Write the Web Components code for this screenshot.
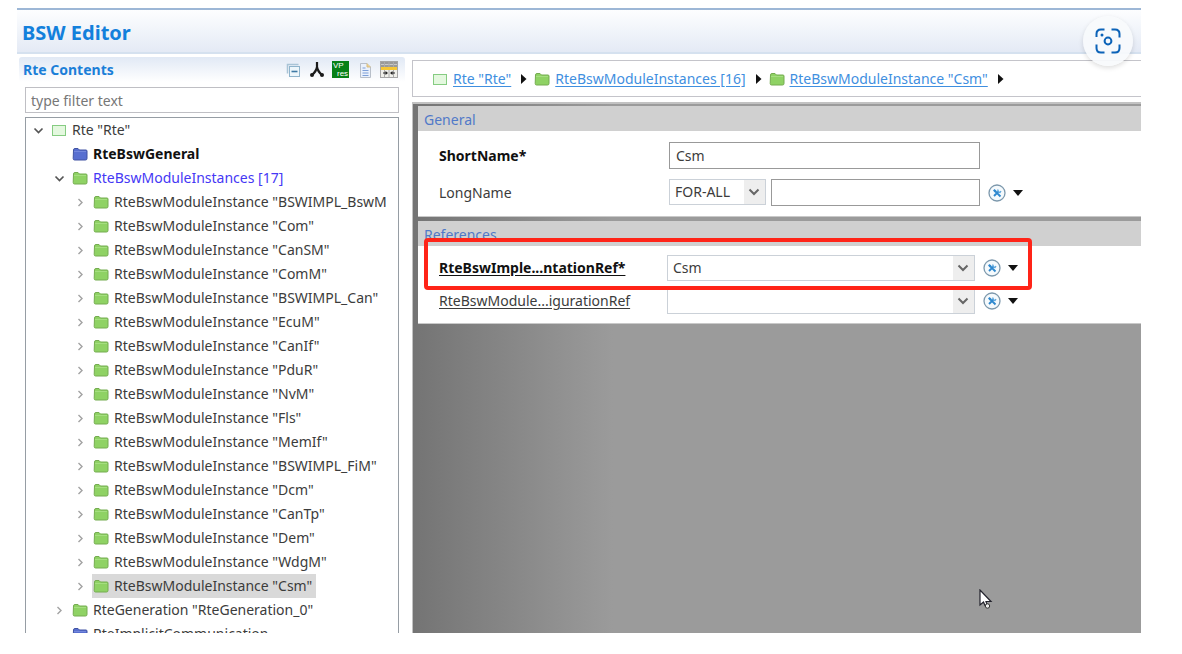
<!DOCTYPE html>
<html lang="en">
<head>
<meta charset="utf-8">
<title>BSW Editor</title>
<style>
  html, body { height: 100%; }
  body { margin: 0; background: #fff; color: #3c3c3c; font: 14px/24px "Noto Sans", "Open Sans", sans-serif; }
  bsw-editor { box-sizing: border-box; height: 100%; padding: 8px 41px 21px 17px; }
</style>
</head>
<body>
<bsw-editor></bsw-editor>
<script>
const define = (name, html, setup) => {
  const template = document.createElement('template');
  template.innerHTML = html;
  customElements.define(name, class extends HTMLElement {
    connectedCallback() {
      if (this.shadowRoot) return;
      this.attachShadow({ mode: 'open' }).append(template.content.cloneNode(true));
      if (setup) setup(this, this.shadowRoot);
    }
  });
};

const ICONS = {
  green: `<svg width="16" height="16" viewBox="0 0 16 16"><path d="M1.5 4 Q1.5 2.5 3 2.5 H6 L7.5 4 H14 Q15 4 15 5 V12.5 Q15 14 13.5 14 H2.5 Q1.2 14 1.2 12.5 Z" fill="#8fd264" stroke="#75ac50"/><path d="M2 5.5 H14" stroke="#a5de80"/></svg>`,
  blue: `<svg width="16" height="16" viewBox="0 0 16 16"><path d="M1.5 4 Q1.5 2.5 3 2.5 H6 L7.5 4 H14 Q15 4 15 5 V12.5 Q15 14 13.5 14 H2.5 Q1.2 14 1.2 12.5 Z" fill="#586fd0" stroke="#4053a2"/><path d="M2 5.5 H14" stroke="#7488dc"/></svg>`,
  module: `<svg width="16" height="16" viewBox="0 0 16 16"><rect x="1.5" y="3.5" width="13" height="10" fill="#e4f8df" stroke="#86cc82"/></svg>`
};

define('folder-icon', `<style>:host{display:block;flex:none;width:16px;height:16px}svg{display:block}</style>`,
  (el, root) => { root.innerHTML += ICONS[el.getAttribute('kind') || 'green']; });

define('tool-button', `<style>
  :host{display:block;flex:none}
  button{display:block;margin:0;padding:0;border:0;background:none;width:18px;height:18px}
  ::slotted(svg){display:block}
</style><button type="button"><slot></slot></button>`,
  (el, root) => root.querySelector('button').setAttribute('aria-label', el.getAttribute('label')));

define('tree-item', `<style>
  :host{display:flex;align-items:center;height:24px;white-space:nowrap}
  :host([level="0"]){padding-left:4px}
  :host([level="1"]){padding-left:25px}
  :host([level="2"]){padding-left:46px}
  .arrow{flex:none;width:16px;height:16px;margin-right:4px}
  .entry{display:flex;align-items:center;gap:5px;height:24px;padding:0 4px 0 1px}
  :host([bold]){font-weight:700;color:#111}
  :host([group]){color:#4538f5}
  :host([selected]) .entry{background:#d9d9d9}
</style><svg class="arrow" viewBox="0 0 16 16" fill="none"></svg><span class="entry"><span><slot></slot></span></span>`,
  (el, root) => {
    const icon = document.createElement('folder-icon');
    icon.setAttribute('kind', el.getAttribute('kind') || 'green');
    root.querySelector('.entry').prepend(icon);
    const state = el.getAttribute('state');
    if (state === 'open') root.querySelector('.arrow').innerHTML = '<path d="M4.500 6.500 L8.500 10.500 L12.500 6.500" stroke="#555" stroke-width="1.700"/>';
    if (state === 'closed') root.querySelector('.arrow').innerHTML = '<path d="M6.500 5 L10 8.500 L6.500 12" stroke="#a2a2a2" stroke-width="1.400"/>';
  });

define('contents-panel', `<style>
  :host{display:flex;flex-direction:column;min-width:0;min-height:0;padding:3px 0 0 2px}
  header{display:flex;align-items:center;height:25px;padding:0 7px 0 4px;background:linear-gradient(#e1e9f5,#fff);border-radius:3px 3px 0 0}
  h2{flex:1;margin:0;font-size:14px;line-height:24px;color:#1b7fd8}
  .tools{display:flex;gap:6px}
  input{box-sizing:border-box;height:26px;margin:5px 6px 4px;padding:0 5px;border:1px solid #bfbfc4;font:inherit;color:#555;outline:0}
  input::placeholder{color:#777;opacity:1}
  .tree{flex:1;min-height:0;overflow:hidden;margin:0 6px;padding:0 2px 0 0;border:1px solid #969da4;border-bottom:0}
  .clip{overflow:hidden;height:100%}
</style>
<header><h2>Rte Contents</h2><div class="tools">
<tool-button label="Collapse all"><svg width="18" height="18" viewBox="0 0 18 18"><path d="M3.500 12.500 V3.500 H14.500" fill="none" stroke="#a9c4d6" stroke-width="1.500"/><rect x="5.500" y="5.500" width="10" height="10" fill="#edf6fb" stroke="#8fb4cc"/><path d="M7.500 10.500 H13.500" stroke="#3e79a4" stroke-width="1.600"/></svg></tool-button>
<tool-button label="Show hierarchy"><svg width="18" height="18" viewBox="0 0 18 18"><path d="M9 1 V7 M9 6 Q8.500 10 4 14 M9 6 Q9.500 10 14 14" fill="none" stroke="#1b1b1b" stroke-width="2.200"/><circle cx="4" cy="14" r="2" fill="#1b1b1b"/><circle cx="14" cy="14" r="2" fill="#1b1b1b"/></svg></tool-button>
<tool-button label="Variation points"><svg width="18" height="18" viewBox="0 0 18 18"><rect x="0" y="0" width="17" height="17" fill="#078016"/><text x="1" y="7" font-family="Liberation Sans,sans-serif" font-size="8" fill="#fff">VP</text><text x="5" y="15" font-family="Liberation Sans,sans-serif" font-size="8" fill="#fff">res</text></svg></tool-button>
<tool-button label="Open description"><svg width="18" height="18" viewBox="0 0 18 18"><path d="M4.500 2.500 H11 L14.500 6 V16.500 H4.500 Z" fill="#eaf1fc" stroke="#b8bfc9"/><path d="M11 2.500 V6 H14.500" fill="#f1d28b" stroke="#d7bd82"/><path d="M6.500 7 H9.500 M6.500 9.500 H12.500 M6.500 12 H12.500 M6.500 14.500 H12.500" stroke="#7d9fd8"/></svg></tool-button>
<tool-button label="Table view"><svg width="18" height="18" viewBox="0 0 18 18"><rect x=".5" y=".5" width="17" height="16" fill="#efefea" stroke="#a5a5a5"/><path d="M1 1 H17 V6 H1 Z" fill="#999"/><path d="M1 3.500 H17" stroke="#c8c8c8"/><path d="M4.500 1 V16 M9 1 V16 M13.500 1 V16" stroke="#aaa"/><path d="M1 7.500 H17" stroke="#f5c636" stroke-width="3"/><path d="M3 12 H7 M11 12 H15" stroke="#222" stroke-width="1.200"/><path d="M5.500 10 L8 12 L5.500 14 Z M12.500 10 L10 12 L12.500 14 Z" fill="#222"/></svg></tool-button>
</div></header>
<input type="text" placeholder="type filter text" aria-label="Filter text">
<div class="tree"><div class="clip"></div></div>`,
  (el, root) => {
    const clip = root.querySelector('.clip');
    const add = (text, attrs) => {
      const item = document.createElement('tree-item');
      item.textContent = text;
      for (const key in attrs) item.setAttribute(key, attrs[key]);
      clip.append(item);
    };
    add('Rte "Rte"', { level: 0, kind: 'module', state: 'open' });
    add('RteBswGeneral', { level: 1, kind: 'blue', bold: '' });
    add('RteBswModuleInstances [17]', { level: 1, state: 'open', group: '' });
    add('RteBswModuleInstance "BSWIMPL_BswM', { level: 2, state: 'closed' });
    for (const name of ['Com', 'CanSM', 'ComM', 'BSWIMPL_Can', 'EcuM', 'CanIf', 'PduR', 'NvM', 'Fls', 'MemIf', 'BSWIMPL_FiM', 'Dcm', 'CanTp', 'Dem', 'WdgM'])
      add(`RteBswModuleInstance "${name}"`, { level: 2, state: 'closed' });
    add('RteBswModuleInstance "Csm"', { level: 2, state: 'closed', selected: '' });
    add('RteGeneration "RteGeneration_0"', { level: 1, state: 'closed' });
    add('RteImplicitCommunication', { level: 1, kind: 'blue' });
  });

define('crumb-trail', `<style>
  :host{display:flex;align-items:center;box-sizing:border-box;height:37px;padding:0 0 0 19px;border:1px solid #c4c4ca;border-right:0;white-space:nowrap;overflow:hidden}
  a{color:#3f8fdf;margin-left:5px;text-underline-offset:2px}
  .next{flex:none;width:8px;height:12px;margin:0 6px 0 9px}
</style>
<folder-icon kind="module"></folder-icon><a href="#rte">Rte "Rte"</a><svg class="next" viewBox="0 0 8 12"><path d="M1 1 L6.500 6 L1 11 Z" fill="#111"/></svg>
<folder-icon></folder-icon><a href="#instances">RteBswModuleInstances [16]</a><svg class="next" viewBox="0 0 8 12"><path d="M1 1 L6.500 6 L1 11 Z" fill="#111"/></svg>
<folder-icon></folder-icon><a href="#csm">RteBswModuleInstance "Csm"</a><svg class="next" viewBox="0 0 8 12"><path d="M1 1 L6.500 6 L1 11 Z" fill="#111"/></svg>`);

define('form-section', `<style>
  :host{display:block;background:#fff;border-bottom:1px solid #c9c9c9}
  h3{margin:0;height:25px;padding-left:6px;background:#d0d0d0;font-size:14px;line-height:28px;font-weight:400;color:#5079c8}
  .body{display:grid}
  :host([rows="wide"]) .body{gap:10px;padding:11px 0 10px 21px}
  :host([rows="tight"]) .body{gap:7px;padding:9px 0 9px 21px}
</style><h3></h3><div class="body"><slot></slot></div>`,
  (el, root) => { root.querySelector('h3').textContent = el.getAttribute('heading'); });

define('field-menu', `<style>
  :host{display:flex;align-items:center}
  button{display:flex;align-items:center;gap:7px;margin:0;padding:0;border:0;background:none}
</style><button type="button" aria-label="Field actions">
<svg width="18" height="18" viewBox="0 0 18 18"><circle cx="9" cy="9" r="8" fill="#f5fafd" stroke="#7c98ac" stroke-width="1.300"/><path d="M6.500 6.500 L12.500 12.500 M10.500 7.500 L6 12" fill="none" stroke="#2e88cf" stroke-width="1.900"/><path d="M5 6.500 L6.500 5 L8.500 7 L7 8.500 Z" fill="#2e88cf"/><path d="M10 5.500 Q9.500 8 12 8.500 L13 7" fill="none" stroke="#5aa5dc" stroke-width="1.300"/></svg>
<svg width="10" height="6" viewBox="0 0 10 6"><path d="M0 0 H10 L5 6 Z" fill="#111"/></svg></button>`);

define('drop-down', `<style>
  :host{display:grid;box-sizing:border-box;height:26px;border:1px solid #cbd1d8;background:#fff}
  select,svg{grid-area:1/1}
  select{appearance:none;min-width:0;width:100%;margin:0;padding:0 22px 0 5px;border:0;background:none;font:inherit;line-height:22px;color:inherit;outline:0;border-radius:0}
  svg{justify-self:end;width:21px;height:100%;background:#eee;pointer-events:none}
</style><svg viewBox="0 0 21 24" fill="none"><path d="M5.500 9.500 L10 14 L14.500 9.500" stroke="#666" stroke-width="2"/></svg><select><option></option></select>`,
  (el, root) => {
    root.querySelector('option').textContent = el.getAttribute('value') || '';
    root.querySelector('select').setAttribute('aria-label', el.getAttribute('label'));
  });

define('text-field', `<style>
  :host{display:grid}
  input{box-sizing:border-box;width:100%;height:27px;margin:0;padding:0 6px;border:1px solid #999;font:inherit;color:inherit;outline:0;border-radius:0}
</style><input type="text">`,
  (el, root) => {
    const input = root.querySelector('input');
    input.value = el.getAttribute('value') || '';
    input.setAttribute('aria-label', el.getAttribute('label'));
  });

define('form-row', `<style>
  :host{display:grid;grid-template-columns:230px 311px auto;align-items:center;justify-content:start;position:relative;white-space:nowrap}
  :host([reference]){grid-template-columns:228px 308px auto}
  :host([marked]){z-index:1}
  :host([required]) .label{font-weight:700;color:#111}
  .control{display:grid}
  .control.split{grid-template-columns:97px 1fr;gap:5px}
  .label{line-height:24px}
  a{color:inherit;text-underline-offset:2px}
  ::slotted(field-menu){margin-left:8px}
  .mark{position:absolute;inset:-17px auto -9px -15px;width:600px;border:4px solid #ff2418;border-radius:4px;pointer-events:none}
</style><span class="label"></span><div class="control"><slot></slot></div><slot name="menu"></slot>`,
  (el, root) => {
    const label = root.querySelector('.label');
    if (el.hasAttribute('reference')) {
      const link = document.createElement('a');
      link.href = '#reference';
      link.textContent = el.getAttribute('label');
      label.append(link);
    } else label.textContent = el.getAttribute('label');
    if (el.children.length > 2) root.querySelector('.control').classList.add('split');
    if (el.hasAttribute('marked')) {
      const mark = document.createElement('div');
      mark.className = 'mark';
      root.append(mark);
    }
  });

define('detail-form', `<style>
  :host{display:flex;flex-direction:column;gap:4px;box-sizing:border-box;flex:1;min-height:0;padding:2px 0 0 5px;border:solid #c2c2c2;border-width:2px 0 0 1px;
    background:linear-gradient(90deg,#747474 0,#9b9b9b 200px,#9b9b9b 100%);overflow:hidden;position:relative}
  .pointer{position:absolute;left:566px;top:485px}
</style>
<form-section heading="General" rows="wide">
  <form-row label="ShortName*" required><text-field value="Csm" label="ShortName"></text-field></form-row>
  <form-row label="LongName"><drop-down value="FOR-ALL" label="Language"></drop-down><text-field label="LongName"></text-field><field-menu slot="menu"></field-menu></form-row>
</form-section>
<form-section heading="References" rows="tight">
  <form-row label="RteBswImple...ntationRef*" required reference marked><drop-down value="Csm" label="RteBswImplementationRef"></drop-down><field-menu slot="menu"></field-menu></form-row>
  <form-row label="RteBswModule...igurationRef" reference><drop-down label="RteBswModuleConfigurationRef"></drop-down><field-menu slot="menu"></field-menu></form-row>
</form-section>
<svg class="pointer" width="14" height="21" viewBox="0 0 14 21"><path d="M1 1 V16 L4.500 13 L6 16.500 L8 15.500 L7 12.500 H12 Z" fill="#fff" stroke="#22222c" stroke-width="1.200"/><circle cx="8.500" cy="17" r="2.200" fill="#eee" stroke="#333"/></svg>`);

define('bsw-editor', `<style>
  :host{display:block}
  .window{display:flex;flex-direction:column;height:100%;position:relative;overflow:hidden}
  .title{box-sizing:border-box;flex:none;height:46px;border-top:2px solid #9db7d6;border-bottom:2px solid #d5e1ef;background:linear-gradient(#fdfeff,#e4eaf5);padding-left:5px}
  h1{margin:0;font-size:20px;line-height:46px;font-weight:700;color:#1380dc}
  .columns{flex:1;min-height:0;display:grid;grid-template-columns:388px minmax(0,1fr);gap:7px}
  .details{display:flex;flex-direction:column;gap:5px;min-height:0;padding-top:6px}
  .capture{position:absolute;z-index:2;top:8px;right:8px;width:50px;height:50px;padding:0;border:0;border-radius:50%;background:#f8fafcee;box-shadow:0 2px 5px #0002;display:grid;place-items:center}
</style>
<div class="window">
  <div class="title"><h1>BSW Editor</h1></div>
  <div class="columns">
    <contents-panel></contents-panel>
    <div class="details"><crumb-trail></crumb-trail><detail-form></detail-form></div>
  </div>
  <button class="capture" type="button" aria-label="Visual search"><svg width="26" height="26" viewBox="0 0 26 26" fill="none" stroke="#0c63b8" stroke-width="2"><path d="M1.500 9 V6 Q1.500 1.500 6 1.500 H9.500 M16.500 1.500 H20 Q24.500 1.500 24.500 6 V9.500 M24.500 16.500 V20 Q24.500 24.500 20 24.500 H16.500 M9.500 24.500 H6 Q1.500 24.500 1.500 20 V16.500"/><circle cx="13" cy="13" r="3.400"/><circle cx="7" cy="7" r="1.500" fill="#0c63b8" stroke="none"/></svg></button>
</div>`);
</script>
</body>
</html>
